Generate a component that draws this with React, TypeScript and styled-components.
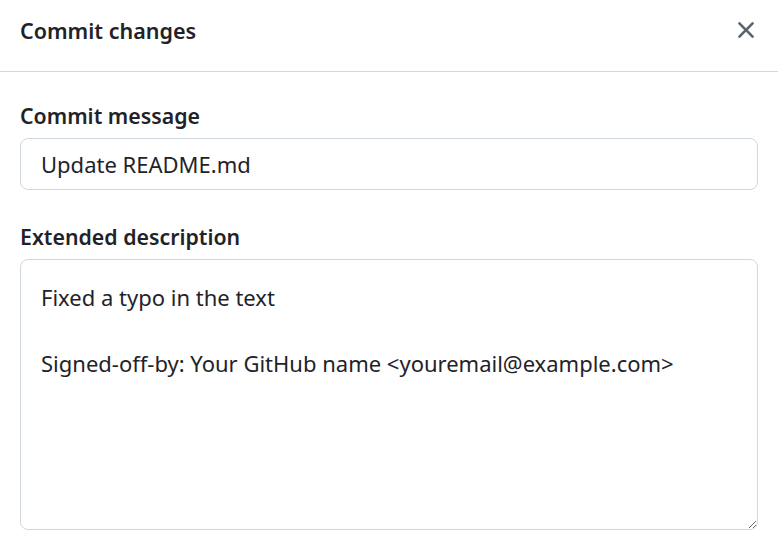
import React from "react";
import styled, { createGlobalStyle } from "styled-components";

const Global = createGlobalStyle`
  html, body { margin: 0; padding: 0; background: #ffffff; }
  body { font-family: "Noto Sans", "Open Sans", sans-serif; color: #1f2328; }
  * { box-sizing: border-box; }
`;

const Dialog = styled.div`
  width: 778px;
  height: 544px;
  background: #ffffff;
  display: flex;
  flex-direction: column;
  overflow: hidden;
`;

const Header = styled.div`
  height: 72px;
  border-bottom: 1px solid #d1d9e0;
  display: flex;
  align-items: flex-start;
  justify-content: space-between;
  padding: 17px 16px 0 20px;
`;

const Title = styled.h1`
  margin: 0;
  font-size: 21.5px;
  font-weight: 600;
  line-height: 28px;
`;

const CloseButton = styled.button`
  width: 32px;
  height: 32px;
  margin-top: -3px;
  border: none;
  background: transparent;
  padding: 0;
  display: flex;
  align-items: center;
  justify-content: center;
  color: #59636e;
  cursor: pointer;
`;

const Body = styled.div`
  padding: 30px 20px 0;
  display: flex;
  flex-direction: column;
`;

const Field = styled.div<{ $gap?: number }>`
  display: flex;
  flex-direction: column;
  gap: 8px;
  margin-bottom: ${(p) => p.$gap ?? 0}px;
`;

const Label = styled.label`
  font-size: 21.3px;
  font-weight: 600;
  line-height: 28px;
`;

const Input = styled.input`
  height: 52px;
  width: 100%;
  border: 1px solid #d1d9e0;
  border-radius: 8px;
  padding: 0 20px;
  font-family: inherit;
  font-size: 22px;
  color: #1f2328;
  background: #ffffff;
  outline: none;
`;

const TextArea = styled.textarea`
  height: 271px;
  width: 100%;
  border: 1px solid #d1d9e0;
  border-radius: 8px;
  padding: 21px 20px;
  font-family: inherit;
  font-size: 22px;
  line-height: 33px;
  color: #1f2328;
  background: #ffffff;
  outline: none;
  resize: vertical;
`;

export default function App() {
  return (
    <>
      <Global />
      <Dialog>
        <Header>
          <Title>Commit changes</Title>
          <CloseButton aria-label="Close">
            <svg width="28" height="28" viewBox="0 0 16 16" fill="currentColor">
              <path d="M3.72 3.72a.75.75 0 0 1 1.06 0L8 6.94l3.22-3.22a.749.749 0 0 1 1.275.326.749.749 0 0 1-.215.734L9.06 8l3.22 3.22a.749.749 0 0 1-.326 1.275.749.749 0 0 1-.734-.215L8 9.06l-3.220 3.22a.751.751 0 0 1-1.042-.018.751.751 0 0 1-.018-1.042L6.94 8 3.72 4.78a.75.75 0 0 1 0-1.06Z" />
            </svg>
          </CloseButton>
        </Header>
        <Body>
          <Field $gap={33}>
            <Label>Commit message</Label>
            <Input defaultValue="Update README.md" />
          </Field>
          <Field>
            <Label>Extended description</Label>
            <TextArea
              defaultValue={"Fixed a typo in the text\n\nSigned-off-by: Your GitHub name <youremail@example.com>"}
            />
          </Field>
        </Body>
      </Dialog>
    </>
  );
}
